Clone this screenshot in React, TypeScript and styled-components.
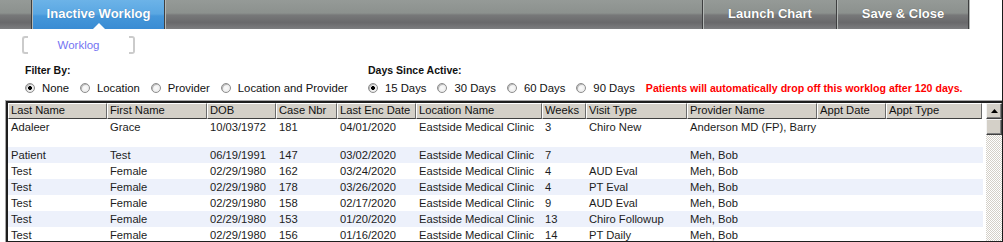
import React from 'react'
import styled, { createGlobalStyle } from 'styled-components'

const GlobalStyle = createGlobalStyle`
	html, body {
		margin: 0;
		padding: 0;
		background: #ffffff;
	}
	body {
		font-family: 'Liberation Sans', Arial, sans-serif;
	}
`

const columns = [
	{ title: 'Last Name', width: 99 },
	{ title: 'First Name', width: 100 },
	{ title: 'DOB', width: 69 },
	{ title: 'Case Nbr', width: 61 },
	{ title: 'Last Enc Date', width: 79 },
	{ title: 'Location Name', width: 126 },
	{ title: 'Weeks', width: 44 },
	{ title: 'Visit Type', width: 101 },
	{ title: 'Provider Name', width: 130 },
	{ title: 'Appt Date', width: 69 },
	{ title: 'Appt Type', width: 96 },
]

const gridTemplate = columns.map(c => `${c.width}px`).join(' ')

const clinic = 'Eastside Medical Clinic'

const rows = [
	['Adaleer', 'Grace', '10/03/1972', '181', '04/01/2020', clinic, '3', 'Chiro New', 'Anderson MD (FP), Barry', '', ''],
	['Patient', 'Test', '06/19/1991', '147', '03/02/2020', clinic, '7', '', 'Meh, Bob', '', ''],
	['Test', 'Female', '02/29/1980', '162', '03/24/2020', clinic, '4', 'AUD Eval', 'Meh, Bob', '', ''],
	['Test', 'Female', '02/29/1980', '178', '03/26/2020', clinic, '4', 'PT Eval', 'Meh, Bob', '', ''],
	['Test', 'Female', '02/29/1980', '158', '02/17/2020', clinic, '9', 'AUD Eval', 'Meh, Bob', '', ''],
	['Test', 'Female', '02/29/1980', '153', '01/20/2020', clinic, '13', 'Chiro Followup', 'Meh, Bob', '', ''],
	['Test', 'Female', '02/29/1980', '156', '01/16/2020', clinic, '14', 'PT Daily', 'Meh, Bob', '', ''],
]

const filterOptions = ['None', 'Location', 'Provider', 'Location and Provider']
const dayOptions = ['15 Days', '30 Days', '60 Days', '90 Days']

const Radio = ({ label, checked }: { label: string; checked?: boolean }) => (
	<RadioItem>
		<RadioCircle $checked={checked} />
		<span>{label}</span>
	</RadioItem>
)

export default function App() {
	return (
		<>
			<GlobalStyle />
			<Page>
				<TopBar>
					<BarFill $width={31} />
					<Separator />
					<ActiveTab>Inactive Worklog</ActiveTab>
					<Separator />
					<BarFill />
					<Separator />
					<BarButton $width={132}>Launch Chart</BarButton>
					<Separator />
					<BarButton $width={130}>Save &amp; Close</BarButton>
					<Separator />
					<BarBlank />
				</TopBar>

				<SubTabs>
					<SubTab>Worklog</SubTab>
				</SubTabs>

				<Filters>
					<FilterGroup $width={343}>
						<GroupTitle>Filter By:</GroupTitle>
						<RadioRow>
							{filterOptions.map((o, i) => (
								<Radio key={o} label={o} checked={i === 0} />
							))}
						</RadioRow>
					</FilterGroup>
					<FilterGroup>
						<GroupTitle>Days Since Active:</GroupTitle>
						<RadioRow>
							{dayOptions.map((o, i) => (
								<Radio key={o} label={o} checked={i === 0} />
							))}
							<Warning>Patients will automatically drop off this worklog after 120 days.</Warning>
						</RadioRow>
					</FilterGroup>
				</Filters>

				<TableFrame>
					<TableInner>
						<GridArea>
							<HeaderRow>
								{columns.map(c => (
									<HeaderCell key={c.title}>{c.title}</HeaderCell>
								))}
							</HeaderRow>
							{rows.map((r, i) => (
								<DataRow key={i} $alt={i % 2 === 1} $tall={i === 0}>
									{r.map((v, j) => (
										<Cell key={j}>{v}</Cell>
									))}
								</DataRow>
							))}
						</GridArea>
						<ScrollBar>
							<ScrollButton>
								<svg width="7" height="4" viewBox="0 0 7 4">
									<path d="M3.5 0 L7 4 L0 4 Z" fill="#000" />
								</svg>
							</ScrollButton>
							<ScrollThumb />
							<ScrollTrack />
						</ScrollBar>
					</TableInner>
				</TableFrame>
			</Page>
		</>
	)
}

const Page = styled.div`
	width: 1002px;
	height: 242px;
	border-right: 1px solid #1a1a1a;
	display: flex;
	flex-direction: column;
	overflow: hidden;
	background: #fff;
`

const barGradient = `linear-gradient(
	to bottom,
	#959a97 0%,
	#8c918e 45%,
	#777879 52%,
	#69696b 78%,
	#7d7e80 100%
)`

const TopBar = styled.div`
	display: flex;
	height: 29px;
	flex-shrink: 0;
`

const BarFill = styled.div<{ $width?: number }>`
	background: ${barGradient};
	${({ $width }) => ($width ? `width: ${$width}px;` : 'flex: 1;')}
`

const BarBlank = styled.div`
	width: 32px;
	background: #fff;
`

const Separator = styled.div`
	width: 2px;
	background: linear-gradient(to right, #3e3f40 50%, #b4b8b6 50%);
`

const ActiveTab = styled.div`
	position: relative;
	width: 131px;
	display: flex;
	align-items: center;
	justify-content: center;
	padding-bottom: 3px;
	box-sizing: border-box;
	color: #fff;
	font-weight: bold;
	font-size: 13px;
	background: linear-gradient(
		to bottom,
		#6cb3e8 0%,
		#5aa7e2 48%,
		#4597da 55%,
		#3a8cd3 100%
	);
	text-shadow: 0 0 1px rgba(0, 40, 90, 0.4);

	&::after {
		content: '';
		position: absolute;
		left: 60px;
		bottom: 0;
		border-left: 6px solid transparent;
		border-right: 6px solid transparent;
		border-bottom: 6px solid #fff;
	}
`

const BarButton = styled.div<{ $width: number }>`
	width: ${({ $width }) => $width}px;
	display: flex;
	align-items: center;
	justify-content: center;
	padding-bottom: 3px;
	box-sizing: border-box;
	color: #fff;
	font-weight: bold;
	font-size: 13px;
	background: ${barGradient};
	text-shadow: 0 0 1px rgba(0, 0, 0, 0.45);
`

const SubTabs = styled.div`
	display: flex;
	padding: 7px 0 0 22px;
`

const SubTab = styled.div`
	position: relative;
	width: 113px;
	height: 18px;
	display: flex;
	align-items: center;
	justify-content: center;
	font-size: 11.5px;
	color: #7474f2;

	&::before,
	&::after {
		content: '';
		position: absolute;
		top: 0;
		bottom: 0;
		width: 4px;
		border: 2px solid #cbcbcb;
	}
	&::before {
		left: 0;
		border-right: none;
		border-radius: 3px 0 0 3px;
	}
	&::after {
		right: 0;
		border-left: none;
		border-radius: 0 3px 3px 0;
	}
`

const Filters = styled.div`
	display: flex;
	padding: 9px 0 0 25px;
`

const FilterGroup = styled.div<{ $width?: number }>`
	display: flex;
	flex-direction: column;
	${({ $width }) => ($width ? `width: ${$width}px;` : '')}
`

const GroupTitle = styled.div`
	font-size: 10.5px;
	font-weight: bold;
	line-height: 14px;
	color: #111;
`

const RadioRow = styled.div`
	display: flex;
	align-items: center;
	gap: 11px;
	margin-top: 4px;
	height: 14px;
`

const RadioItem = styled.div`
	display: flex;
	align-items: center;
	gap: 7px;
	font-size: 11.3px;
	color: #111;
	white-space: nowrap;
`

const RadioCircle = styled.span<{ $checked?: boolean }>`
	width: 10px;
	height: 10px;
	box-sizing: border-box;
	border-radius: 50%;
	border: 1px solid #8d8d8d;
	background: ${({ $checked }) =>
		$checked
			? 'radial-gradient(circle, #000 0 1.8px, #f4f4f4 2.2px, #dcdcdc 100%)'
			: 'radial-gradient(circle, #fbfbfb 0%, #e6e6e6 100%)'};
	box-shadow: inset 1px 1px 0 #b8b8b8;
`

const Warning = styled.span`
	font-size: 10.6px;
	font-weight: bold;
	color: #ff0000;
	white-space: nowrap;
`

const TableFrame = styled.div`
	margin: 5px 0 0 5px;
	flex: 1;
	min-height: 0;
	border-top: 1px solid #a8a8a8;
	border-left: 1px solid #a8a8a8;
	display: flex;
`

const TableInner = styled.div`
	flex: 1;
	min-height: 0;
	display: flex;
	border-top: 2px solid #1e1e1e;
	border-left: 2px solid #1e1e1e;
	border-bottom: 1px solid #1e1e1e;
	overflow: hidden;
`

const GridArea = styled.div`
	width: 977px;
	display: flex;
	flex-direction: column;
	overflow: hidden;
`

const HeaderRow = styled.div`
	display: grid;
	grid-template-columns: ${gridTemplate};
	height: 16px;
	flex-shrink: 0;
`

const HeaderCell = styled.div`
	box-sizing: border-box;
	background: #d4d0c8;
	border-top: 1px solid #fff;
	border-left: 1px solid #fff;
	border-right: 1px solid #6a6a6a;
	border-bottom: 1px solid #404040;
	padding-left: 2px;
	font-size: 11.2px;
	line-height: 13px;
	color: #111;
	white-space: nowrap;
	overflow: hidden;
`

const DataRow = styled.div<{ $alt?: boolean; $tall?: boolean }>`
	display: grid;
	grid-template-columns: ${gridTemplate};
	height: ${({ $tall }) => ($tall ? 28 : 16)}px;
	flex-shrink: 0;
	background: ${({ $alt }) => ($alt ? '#edf1fb' : '#fff')};
`

const Cell = styled.div`
	padding-left: 3px;
	font-size: 11.2px;
	line-height: 16px;
	color: #1c1c1c;
	white-space: nowrap;
`

const ScrollBar = styled.div`
	width: 16px;
	margin-left: 3px;
	display: flex;
	flex-direction: column;
`

const raised = `
	box-sizing: border-box;
	background: #d4d0c8;
	border-top: 1px solid #f4f4f4;
	border-left: 1px solid #f4f4f4;
	border-right: 1px solid #404040;
	border-bottom: 1px solid #404040;
	box-shadow: inset -1px -1px 0 #808080;
`

const ScrollButton = styled.div`
	${raised}
	height: 16px;
	display: flex;
	align-items: center;
	justify-content: center;
`

const ScrollThumb = styled.div`
	${raised}
	height: 16px;
`

const ScrollTrack = styled.div`
	flex: 1;
	background-color: #fff;
	background-image: repeating-conic-gradient(#d4d0c8 0 25%, #fff 0 50%);
	background-size: 2px 2px;
`
